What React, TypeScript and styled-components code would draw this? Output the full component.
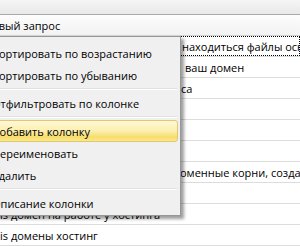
import React from "react";
import styled, { createGlobalStyle } from "styled-components";

const GlobalStyle = createGlobalStyle`
  html, body { margin: 0; padding: 0; background: #ffffff; }
  body { font-family: "Segoe UI", "Open Sans", "Noto Sans", sans-serif; font-size: 11px; color: #000; }
`;

const Screen = styled.div`
  position: relative;
  width: 300px;
  height: 246px;
  overflow: hidden;
  background: #ffffff;
  display: flex;
  flex-direction: column;
`;

const TopBar = styled.div`
  height: 14px;
  flex: none;
  background: linear-gradient(#f5f5f5, #e9e9e9);
  border-bottom: 1px solid #a9a9a9;
`;

const HeaderRow = styled.div`
  height: 20px;
  flex: none;
  display: flex;
  align-items: center;
  background: linear-gradient(#fdfdfd, #f2f2f2);
  border-bottom: 1px solid #d2d2d2;
  white-space: nowrap;
  overflow: hidden;
`;

const HeaderText = styled.span<{ $indent: number }>`
  margin-left: ${(p) => p.$indent}px;
`;

const Row = styled.div`
  height: 20px;
  flex: none;
  display: grid;
  grid-template-columns: 180px 1fr;
  border-bottom: 1px solid #dcdcdc;
`;

const Cell = styled.div<{ $indent?: number; $focused?: boolean }>`
  display: flex;
  align-items: center;
  white-space: nowrap;
  overflow: hidden;
  padding-left: ${(p) => p.$indent ?? 0}px;
  box-sizing: border-box;
  outline: ${(p) => (p.$focused ? "1px dotted #000" : "none")};
  outline-offset: -1px;
`;

const Menu = styled.div`
  position: absolute;
  left: -40px;
  top: 36px;
  width: 221px;
  box-sizing: border-box;
  background: #f0f0f0;
  border: 1px solid #979797;
  padding: 5px 0 1px 0;
  box-shadow: 3px 3px 3px rgba(0, 0, 0, 0.38);
  display: flex;
  flex-direction: column;
`;

const Item = styled.div<{ $active?: boolean }>`
  height: 22px;
  box-sizing: border-box;
  margin: 0 2px 0 2px;
  padding-left: 28px;
  display: flex;
  align-items: center;
  white-space: nowrap;
  border-radius: 3px;
  border: 1px solid ${(p) => (p.$active ? "#e5c66b" : "transparent")};
  background: ${(p) =>
    p.$active ? "linear-gradient(#fef8d6 0%, #fcefb0 50%, #f6de6a 80%, #f9e98f 100%)" : "transparent"};
`;

const Separator = styled.div`
  height: 6px;
  margin-left: 30px;
  margin-right: 3px;
  display: flex;
  flex-direction: column;
  justify-content: center;
  &::before {
    content: "";
    display: block;
    height: 1px;
    background: #e0e0e0;
  }
  &::after {
    content: "";
    display: block;
    height: 1px;
    background: #ffffff;
  }
`;

type RowData = { left?: string; leftIndent?: number; right?: string; rightIndent?: number; focused?: boolean };

const rows: RowData[] = [
  { right: "находиться файлы основного сайта", rightIndent: 2, focused: true },
  { right: "ваш домен", rightIndent: 5 },
  { right: "са", rightIndent: 1 },
  {},
  {},
  {},
  { right: "оменные корни, созданные", rightIndent: 0 },
  {},
  { left: "is домен на работе у хостинга", leftIndent: 0 },
  { left: "is домены хостинг", leftIndent: 0 },
];

export default function App() {
  return (
    <>
      <GlobalStyle />
      <Screen>
        <TopBar />
        <HeaderRow>
          <HeaderText $indent={-16}>Новый запрос</HeaderText>
        </HeaderRow>
        {rows.map((r, i) => (
          <Row key={i}>
            <Cell $indent={r.leftIndent}>{r.left}</Cell>
            <Cell $indent={r.rightIndent} $focused={r.focused}>
              {r.right}
            </Cell>
          </Row>
        ))}
        <Menu>
          <Item>Сортировать по возрастанию</Item>
          <Item>Сортировать по убыванию</Item>
          <Separator />
          <Item>Отфильтровать по колонке</Item>
          <Separator />
          <Item $active>Добавить колонку</Item>
          <Item>Переименовать</Item>
          <Item>Удалить</Item>
          <Separator />
          <Item>Описание колонки</Item>
        </Menu>
      </Screen>
    </>
  );
}
